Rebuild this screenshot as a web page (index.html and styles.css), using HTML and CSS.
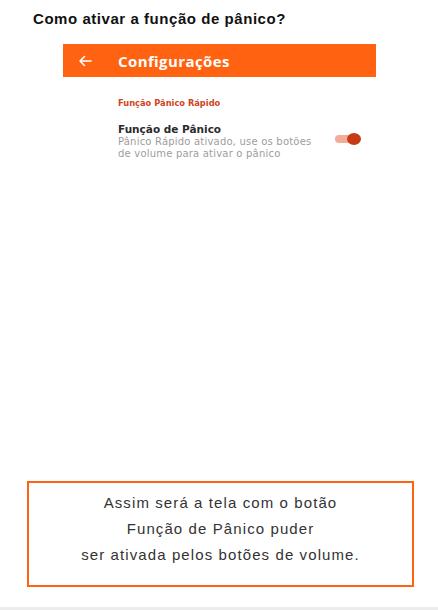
FILE: index.html
```html
<!DOCTYPE html>
<html lang="pt">
<head>
<meta charset="utf-8">
<link rel="stylesheet" href="styles.css">
</head>
<body>
<div class="page">
  <h1 class="title">Como ativar a função de pânico?</h1>
  <div class="phone">
    <div class="appbar">
      <svg class="back" width="14" height="12" viewBox="0 0 14 12"><path d="M13 6H2M6.5 1.5L2 6L6.5 10.5" fill="none" stroke="#fff" stroke-width="1.6" stroke-linecap="round" stroke-linejoin="round"/></svg>
      <span class="appbar-title">Configurações</span>
    </div>
    <div class="settings">
      <div class="section">Função Pânico Rápido</div>
      <div class="row">
        <div class="row-text">
          <div class="row-title">Função de Pânico</div>
          <div class="row-sub">Pânico Rápido ativado, use os botões de volume para ativar o pânico</div>
        </div>
        <div class="toggle"><span class="track"></span><span class="thumb"></span></div>
      </div>
    </div>
  </div>
  <div class="spacer"></div>
  <div class="note">
    <p>Assim será a tela com o botão</p>
    <p>Função de Pânico puder</p>
    <p>ser ativada pelos botões de volume.</p>
  </div>
  <div class="footer"></div>
</div>
</body>
</html>
```
FILE: styles.css
```css
html, body { margin: 0; padding: 0; background: #fff; }
.page {
  width: 438px; height: 610px;
  display: flex; flex-direction: column;
  font-family: "Liberation Sans", Arial, sans-serif;
}
.title {
  margin: 10px 0 0 33px;
  font-size: 15px; font-weight: bold; color: #111;
  line-height: 18px; letter-spacing: 0.55px;
}
.phone { margin: 16px 0 0 63px; width: 313px; }
.appbar {
  height: 33px; background: #ff6210;
  display: flex; align-items: center;
}
.back { margin-left: 15px; }
.appbar-title {
  margin-left: 26px;
  color: #fff; font-family: "Open Sans", sans-serif; font-weight: 700; font-size: 15px;
  letter-spacing: 0.4px;
}
.settings { padding-left: 55px; font-family: "DejaVu Sans", sans-serif; }
.section {
  margin-top: 20px; font-size: 8.3px; font-weight: 700; color: #d0431c; line-height: 12px;
}
.row { display: flex; align-items: flex-start; margin-top: 14px; }
.row-text { width: 200px; }
.row-title { font-size: 10.5px; font-weight: 700; color: #2b2b2b; line-height: 13px; }
.row-sub { font-size: 10px; color: #9d9d9d; line-height: 11.5px; letter-spacing: 0.2px; }
.toggle { position: relative; width: 26px; height: 12px; margin-left: 17px; margin-top: 9.5px; }
.track { position: absolute; left: 0; top: 2px; width: 22px; height: 8px; border-radius: 4px; background: #f4ab9a; }
.thumb { position: absolute; right: 0; top: 0; width: 14px; height: 12px; border-radius: 50%; background: #c83a14; }
.spacer { flex: 1; }
.note {
  margin: 0 0 0 27px; width: 383px; height: 102px;
  border: 2px solid #ff6210;
  display: flex; flex-direction: column; align-items: center;
  font-size: 15px; color: #333; letter-spacing: 1.1px;
}
.note p { margin: 0; line-height: 26px; }
.note p:first-child { margin-top: 7px; }
.footer { height: 23px; background: linear-gradient(#fff 0 20px, #ececec 20px); }
```
